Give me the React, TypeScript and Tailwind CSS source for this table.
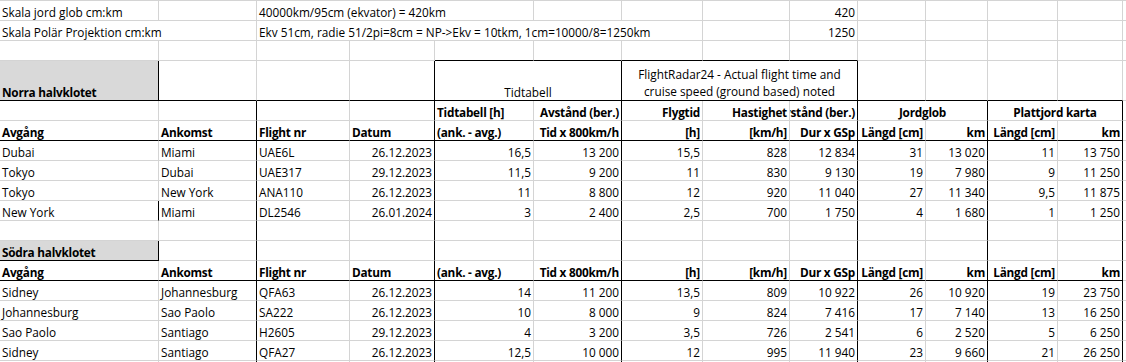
import React from 'react'

type Cell = {
  t?: string
  lines?: string[]
  span?: number
  al?: 'l' | 'r' | 'c'
  b?: boolean
  gray?: boolean
}

type Row = {
  h: 'n' | 't'
  cells: Cell[]
  rb: number[]
  bb: number[]
}

const SPAN: Record<number, string> = {
  1: '',
  2: 'col-span-2',
  3: 'col-span-3',
  5: 'col-span-5',
}

// columns whose right edge gets a black border (by last column index)
const STD = [1, 3, 5, 8, 10, 12]
const ALL = [0, 1, 2, 3, 4, 5, 6, 7, 8, 9, 10, 11, 12]

const e = (n: number): Cell[] => Array.from({ length: n }, () => ({}))
const L = (t: string, b = false): Cell => ({ t, b })
const R = (t: string, b = false): Cell => ({ t, b, al: 'r' })

function dataRow(v: string[]): Cell[] {
  return [L(v[0]), L(v[1]), L(v[2]), ...v.slice(3).map((x) => R(x)), {}]
}

const colHeads: Cell[] = [
  L('Avgång', true),
  L('Ankomst', true),
  L('Flight nr', true),
  L('Datum', true),
  L('(ank. - avg.)', true),
  R('Tid x 800km/h', true),
  R('[h]', true),
  R('[km/h]', true),
  R('Dur x GSp', true),
  R('Längd [cm]', true),
  R('km', true),
  R('Längd [cm]', true),
  R('km', true),
  {},
]

const north = [
  ['Dubai', 'Miami', 'UAE6L', '26.12.2023', '16,5', '13 200', '15,5', '828', '12 834', '31', '13 020', '11', '13 750'],
  ['Tokyo', 'Dubai', 'UAE317', '29.12.2023', '11,5', '9 200', '11', '830', '9 130', '19', '7 980', '9', '11 250'],
  ['Tokyo', 'New York', 'ANA110', '26.12.2023', '11', '8 800', '12', '920', '11 040', '27', '11 340', '9,5', '11 875'],
  ['New York', 'Miami', 'DL2546', '26.01.2024', '3', '2 400', '2,5', '700', '1 750', '4', '1 680', '1', '1 250'],
]

const south = [
  ['Sidney', 'Johannesburg', 'QFA63', '26.12.2023', '14', '11 200', '13,5', '809', '10 922', '26', '10 920', '19', '23 750'],
  ['Johannesburg', 'Sao Paolo', 'SA222', '26.12.2023', '10', '8 000', '9', '824', '7 416', '17', '7 140', '13', '16 250'],
  ['Sao Paolo', 'Santiago', 'H2605', '29.12.2023', '4', '3 200', '3,5', '726', '2 541', '6', '2 520', '5', '6 250'],
  ['Sidney', 'Santiago', 'QFA27', '26.12.2023', '12,5', '10 000', '12', '995', '11 940', '23', '9 660', '21', '26 250'],
]

const rows: Row[] = [
  {
    h: 'n',
    cells: [L('Skala jord glob cm:km'), {}, { t: '40000km/95cm (ekvator) = 420km', span: 3 }, ...e(3), R('420'), ...e(5)],
    rb: [],
    bb: [],
  },
  {
    h: 'n',
    cells: [
      { t: 'Skala Polär Projektion cm:km', span: 2 },
      { t: 'Ekv 51cm, radie 51/2pi=8cm = NP->Ekv = 10tkm, 1cm=10000/8=1250km', span: 5 },
      {},
      R('1250'),
      ...e(5),
    ],
    rb: [],
    bb: [],
  },
  { h: 'n', cells: e(14), rb: [], bb: [4, 5, 6, 7, 8] },
  {
    h: 't',
    cells: [
      { t: 'Norra halvklotet', b: true, gray: true },
      ...e(3),
      { t: 'Tidtabell', span: 2, al: 'c' },
      { lines: ['FlightRadar24 - Actual flight time and', 'cruise speed (ground based) noted'], span: 3, al: 'c' },
      ...e(5),
    ],
    rb: [0, 3, 5, 8],
    bb: ALL,
  },
  {
    h: 'n',
    cells: [
      ...e(4),
      L('Tidtabell [h]', true),
      R('Avstånd (ber.)', true),
      R('Flygtid', true),
      R('Hastighet', true),
      R('Avstånd (ber.)', true),
      { t: 'Jordglob', b: true, al: 'c', span: 2 },
      { t: 'Plattjord karta', b: true, al: 'c', span: 2 },
      {},
    ],
    rb: STD,
    bb: [],
  },
  { h: 'n', cells: colHeads, rb: STD, bb: ALL },
  ...north.map((v, i) => ({ h: 'n' as const, cells: dataRow(v), rb: i === 3 ? [0, ...STD] : STD, bb: [] })),
  { h: 'n', cells: e(14), rb: STD, bb: [] },
  { h: 'n', cells: [{ t: 'Södra halvklotet', b: true, gray: true }, ...e(13)], rb: [0, ...STD], bb: [0] },
  { h: 'n', cells: colHeads, rb: STD, bb: ALL },
  ...south.map((v) => ({ h: 'n' as const, cells: dataRow(v), rb: STD, bb: [] })),
  { h: 'n', cells: e(14), rb: STD, bb: [] },
]

function SheetRow({ row }: { row: Row }) {
  let col = 0
  return (
    <>
      {row.cells.map((c, i) => {
        const span = c.span ?? 1
        const last = col + span - 1
        col += span
        const cls = [
          'flex items-end overflow-hidden whitespace-nowrap px-[2px] border-b',
          row.h === 't' ? 'h-[40px]' : 'h-[20px]',
          SPAN[span],
          last === 13 ? 'border-r-0' : 'border-r',
          row.rb.includes(last) ? 'border-r-black' : 'border-r-[#d4d4d4]',
          row.bb.includes(last) ? 'border-b-black' : 'border-b-[#d4d4d4]',
          c.gray ? 'bg-[#d9d9d9]' : 'bg-white',
          c.b ? 'font-bold tracking-[-0.25px]' : '',
          c.al === 'r' ? 'justify-end' : c.al === 'c' ? 'justify-center' : 'justify-start',
        ].join(' ')
        return (
          <div key={i} className={cls}>
            {c.lines ? (
              <div className="text-center leading-[17px]">
                {c.lines.map((l) => (
                  <div key={l}>{l}</div>
                ))}
              </div>
            ) : c.t ? (
              <span className="shrink-0 leading-[16px]">{c.t}</span>
            ) : null}
          </div>
        )
      })}
    </>
  )
}

export default function App() {
  return (
    <div className="h-[362px] w-[1126px] overflow-hidden bg-white">
      <div
        className="grid grid-cols-[159px_98px_93px_85px_99px_88px_81px_87px_68px_68px_62px_70px_65px_3px] border-t border-t-[#d4d4d4] text-[11.8px] text-black"
        style={{ fontFamily: '"Open Sans", "Liberation Sans", sans-serif' }}
      >
        {rows.map((r, i) => (
          <SheetRow key={i} row={r} />
        ))}
      </div>
    </div>
  )
}
